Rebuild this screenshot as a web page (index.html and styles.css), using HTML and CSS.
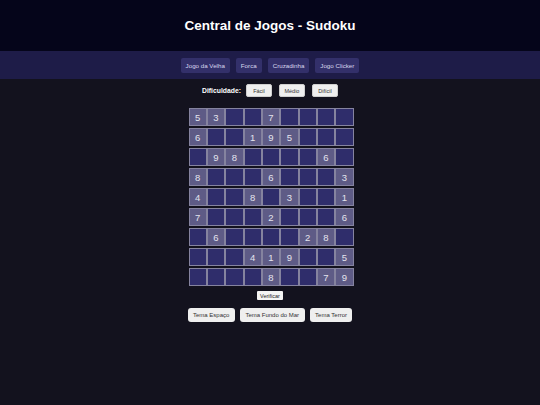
FILE: index.html
```html
<!DOCTYPE html>
<html lang="pt-BR">
<head>
  <meta charset="UTF-8">
  <meta name="viewport" content="width=device-width, initial-scale=1.0">
  <title>Central de Jogos - Sudoku</title>
  <link rel="stylesheet" href="styles.css">
</head>
<body>

  <header class="topo">
    <h1>Central de Jogos - Sudoku</h1>
  </header>

  <!-- Menu de jogos -->
  <nav class="menu">
    <button class="menu-btn">Jogo da Velha</button>
    <button class="menu-btn">Forca</button>
    <button class="menu-btn">Cruzadinha</button>
    <button class="menu-btn">Jogo Clicker</button>
  </nav>

  <div class="conteudo">
    <div class="dificuldade">
      <span class="dificuldade-label">Dificuldade:</span>
      <button class="dif-btn">Fácil</button>
      <button class="dif-btn">Médio</button>
      <button class="dif-btn">Difícil</button>
    </div>

    <!-- Tabuleiro -->
    <div class="tabuleiro" id="tabuleiro"></div>

    <button class="verificar-btn">Verificar</button>

    <div class="temas">
      <button class="tema-btn">Tema Espaço</button>
      <button class="tema-btn">Tema Fundo do Mar</button>
      <button class="tema-btn">Tema Terror</button>
    </div>
  </div>

  <script>
    // Puzzle inicial (0 = vazio)
    const puzzle = [
      [5,3,0,0,7,0,0,0,0],
      [6,0,0,1,9,5,0,0,0],
      [0,9,8,0,0,0,0,6,0],
      [8,0,0,0,6,0,0,0,3],
      [4,0,0,8,0,3,0,0,1],
      [7,0,0,0,2,0,0,0,6],
      [0,6,0,0,0,0,2,8,0],
      [0,0,0,4,1,9,0,0,5],
      [0,0,0,0,8,0,0,7,9]
    ];

    const tabuleiro = document.getElementById('tabuleiro');
    puzzle.forEach(linha => {
      linha.forEach(valor => {
        const celula = document.createElement('input');
        celula.type = 'text';
        celula.maxLength = 1;
        celula.classList.add('celula');
        if (valor !== 0) {
          celula.value = valor;
          celula.readOnly = true;
          celula.classList.add('fixa');
        }
        tabuleiro.appendChild(celula);
      });
    });
  </script>

</body>
</html>
```

FILE: styles.css
```css
body {
  font-family: "Liberation Sans", Arial, sans-serif;
  margin: 0;
  background-color: #13121e;
  color: #ffffff;
}
.topo {
  background-color: #05051a;
  height: 51px;
  display: flex;
  align-items: center;
  justify-content: center;
}
.topo h1 {
  margin: 0;
  font-size: 13.5px;
  font-weight: bold;
}
.menu {
  background-color: #1e1c48;
  height: 28px;
  display: flex;
  align-items: center;
  justify-content: center;
  gap: 6px;
}
.menu-btn {
  font-family: "Liberation Sans", Arial, sans-serif;
  font-size: 6.2px;
  height: 15px;
  padding: 0 5px;
  background-color: #33306a;
  color: #d8d8ee;
  border: none;
  border-radius: 2px;
}
.conteudo {
  display: flex;
  flex-direction: column;
  align-items: center;
}
.dificuldade {
  display: flex;
  align-items: center;
  gap: 7px;
  margin-top: 5px;
}
.dificuldade-label {
  color: #ffffff;
  font-size: 6.8px;
  font-weight: bold;
  margin-right: -2px;
}
.dif-btn {
  font-family: "Liberation Sans", Arial, sans-serif;
  font-size: 5.5px;
  height: 13px;
  width: 26px;
  padding: 0;
  background-color: #efefef;
  color: #333;
  border: 1px solid #cfcfcf;
  border-radius: 2px;
}
.tabuleiro {
  display: grid;
  grid-template-columns: repeat(9, 1fr);
  row-gap: 2px;
  width: 165px;
  margin-top: 11px;
  margin-left: 2px;
}
.celula {
  box-sizing: border-box;
  width: 100%;
  height: 18px;
  padding: 0;
  margin: 0;
  border: 1px solid #85839f;
  background-color: #2f2d6b;
  color: #e4e4ee;
  font-family: "Liberation Sans", Arial, sans-serif;
  font-size: 9.5px;
  text-align: center;
}
.celula.fixa {
  background-color: #5e5b86;
}
.verificar-btn {
  font-family: "Liberation Sans", Arial, sans-serif;
  font-size: 5.5px;
  height: 9px;
  padding: 0 3px;
  margin-top: 5px;
  background-color: #f4f4f4;
  color: #222;
  border: none;
  border-radius: 1px;
}
.temas {
  display: flex;
  gap: 5px;
  margin-top: 8px;
}
.tema-btn {
  font-family: "Liberation Sans", Arial, sans-serif;
  font-size: 6px;
  height: 14px;
  padding: 0 5.5px;
  background-color: #efefef;
  color: #333;
  border: none;
  border-radius: 3px;
}
```
